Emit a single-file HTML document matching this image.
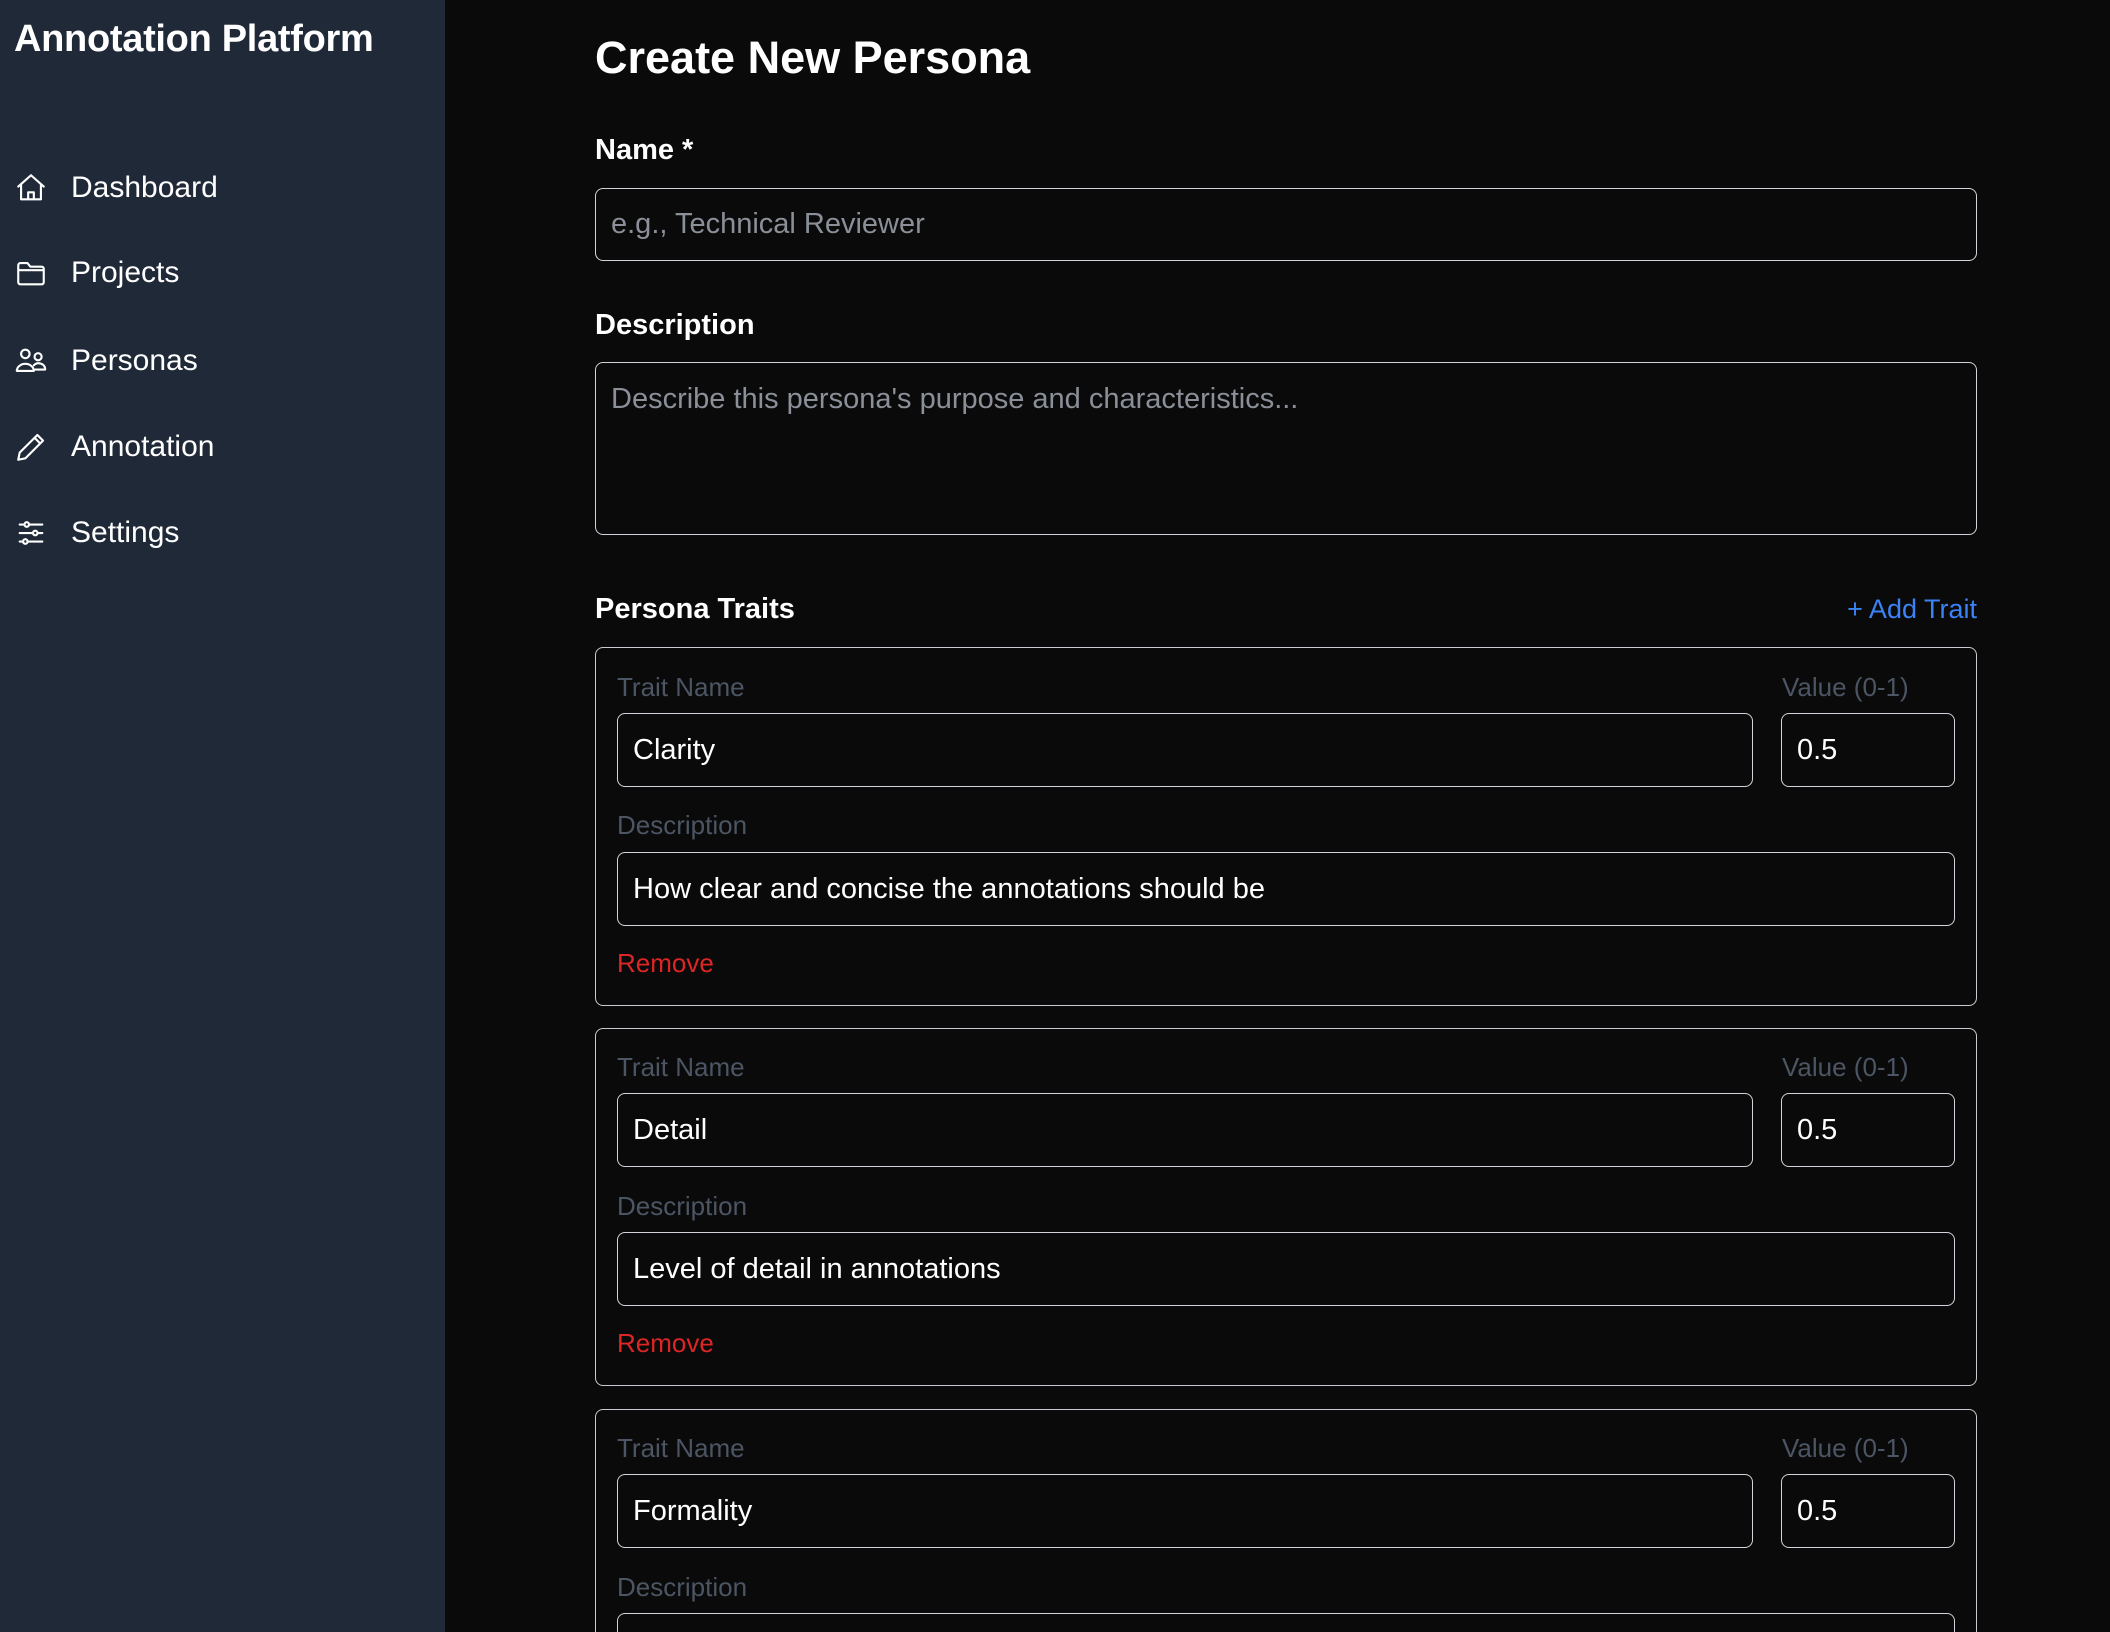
<!DOCTYPE html>
<html style="height:1632px;overflow:hidden"><head><meta charset="utf-8"><style>
*{box-sizing:border-box;margin:0;padding:0}
html,body{overflow:hidden}
body{width:2110px;height:1632px;overflow:hidden;background:#0a0a0a;font-family:"Liberation Sans",sans-serif;color:#fff;position:relative}
.sb{position:absolute;left:0;top:0;width:445px;height:1632px;background:#1f2937}
.t{position:absolute;left:14px;top:18px;font-size:38px;font-weight:bold;letter-spacing:-0.3px}
.nav{position:absolute;left:14px;display:flex;align-items:center;font-size:30px;height:40px}
.nav svg{width:34px;height:34px;margin-right:23px;fill:none;stroke:#fff;stroke-width:1.5;stroke-linecap:round;stroke-linejoin:round}
.a{position:absolute}
h1{position:absolute;left:595px;top:32px;font-size:45px;font-weight:bold}
.lbl{position:absolute;font-size:29px;font-weight:bold}
.box{position:absolute;border:1.5px solid #c8ccd2;border-radius:8px;background:#0a0a0a}
.in{position:absolute;border:1.5px solid #d1d5db;border-radius:8px;font-size:29px;padding-left:15px;display:flex;align-items:center}
.ph{color:#8a8f98}
.g{position:absolute;font-size:26px;color:#4b5563}
.rm{position:absolute;font-size:26px;color:#dc2626}
</style></head><body>
<div class="sb">
<div class="t">Annotation Platform</div>
<div class="nav" style="top:168px"><svg viewBox="0 0 24 24"><path d="M3 11l9-8 9 8M5 9.5V20h14V9.5M10 20v-5h4v5"/></svg>Dashboard</div>
<div class="nav" style="top:253px"><svg viewBox="0 0 24 24"><path d="M3 6.5A1.5 1.5 0 014.5 5h5l2 2.5h8A1.5 1.5 0 0121 9v9.5a1.5 1.5 0 01-1.5 1.5h-15A1.5 1.5 0 013 18.5z M3 10h18"/></svg>Projects</div>
<div class="nav" style="top:341px"><svg viewBox="0 0 24 24"><circle cx="8" cy="7" r="3"/><circle cx="17" cy="9" r="2.5"/><path d="M2 19c0-3 3-5 6-5s6 2 6 5zM14 15c1-1 2-1.5 3-1.5 2.5 0 5 1.5 5 4.5h-7"/></svg>Personas</div>
<div class="nav" style="top:427px"><svg viewBox="0 0 24 24"><path d="M16.5 3.5l4 4L8 20l-5 1 1-5z M14.5 5.5l4 4"/></svg>Annotation</div>
<div class="nav" style="top:513px"><svg viewBox="0 0 24 24"><path d="M4 6h16M4 12h16M4 18h16"/><circle cx="9" cy="6" r="1.6" fill="#1f2937"/><circle cx="15" cy="12" r="1.6" fill="#1f2937"/><circle cx="8" cy="18" r="1.6" fill="#1f2937"/></svg>Settings</div>
</div>
<h1>Create New Persona</h1>
<div class="lbl" style="left:595px;top:134px">Name *</div>
<div class="in" style="left:595px;top:188px;width:1382px;height:73px"><span class="ph">e.g., Technical Reviewer</span></div>
<div class="lbl" style="left:595px;top:309px">Description</div>
<div class="in" style="left:595px;top:362px;width:1382px;height:173px;align-items:flex-start;padding-top:20px"><span class="ph">Describe this persona's purpose and characteristics...</span></div>
<div class="lbl" style="left:595px;top:593px">Persona Traits</div>
<div class="a" style="right:133px;top:594px;font-size:27px;color:#3b82f6">+ Add Trait</div>

<div class="box" style="left:595px;top:647px;width:1382px;height:359px"></div>
<div class="g" style="left:617px;top:672px">Trait Name</div><div class="g" style="left:1782px;top:672px">Value (0-1)</div>
<div class="in" style="left:617px;top:713px;width:1136px;height:74px">Clarity</div>
<div class="in" style="left:1781px;top:713px;width:174px;height:74px">0.5</div>
<div class="g" style="left:617px;top:810px">Description</div>
<div class="in" style="left:617px;top:852px;width:1338px;height:74px">How clear and concise the annotations should be</div>
<div class="rm" style="left:617px;top:948px">Remove</div>

<div class="box" style="left:595px;top:1028px;width:1382px;height:358px"></div>
<div class="g" style="left:617px;top:1052px">Trait Name</div><div class="g" style="left:1782px;top:1052px">Value (0-1)</div>
<div class="in" style="left:617px;top:1093px;width:1136px;height:74px">Detail</div>
<div class="in" style="left:1781px;top:1093px;width:174px;height:74px">0.5</div>
<div class="g" style="left:617px;top:1191px">Description</div>
<div class="in" style="left:617px;top:1232px;width:1338px;height:74px">Level of detail in annotations</div>
<div class="rm" style="left:617px;top:1328px">Remove</div>

<div class="box" style="left:595px;top:1409px;width:1382px;height:223px;border-bottom:none;border-radius:8px 8px 0 0"></div>
<div class="g" style="left:617px;top:1433px">Trait Name</div><div class="g" style="left:1782px;top:1433px">Value (0-1)</div>
<div class="in" style="left:617px;top:1474px;width:1136px;height:74px">Formality</div>
<div class="in" style="left:1781px;top:1474px;width:174px;height:74px">0.5</div>
<div class="g" style="left:617px;top:1572px">Description</div>
<div class="in" style="left:617px;top:1613px;width:1338px;height:19px;border-bottom:none;border-radius:8px 8px 0 0"></div>
</body></html>
